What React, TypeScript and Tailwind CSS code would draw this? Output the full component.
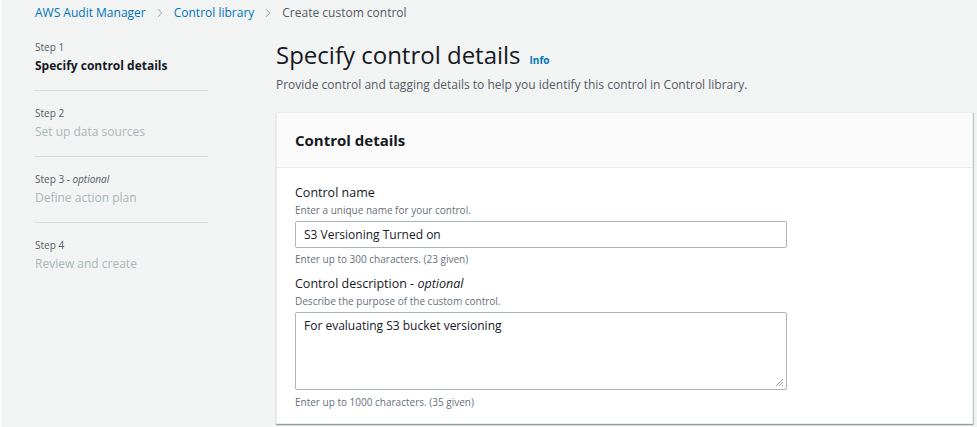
import { ChevronRight } from 'lucide-react';

const steps = [
  { label: 'Step 1', title: 'Specify control details', active: true },
  { label: 'Step 2', title: 'Set up data sources' },
  { label: 'Step 3', optional: true, title: 'Define action plan' },
  { label: 'Step 4', title: 'Review and create' },
];

const App = () => {
  return (
    <div className="min-h-[427px] w-[977px] bg-[#f2f3f3] border-l-2 border-[#fafafa] font-['Open_Sans',sans-serif] text-[#16191f]">
      {/* Breadcrumb */}
      <div className="flex items-center h-[26px] pl-[33px] text-[12px]">
        <a className="text-[#0073bb]">AWS Audit Manager</a>
        <ChevronRight className="h-[14px] w-[14px] mx-[7px] text-[#879596]" strokeWidth={1.5} />
        <a className="text-[#0073bb]">Control library</a>
        <ChevronRight className="h-[14px] w-[14px] mx-[7px] text-[#879596]" strokeWidth={1.5} />
        <span className="text-[#545b64]">Create custom control</span>
      </div>

      <div className="flex">
        {/* Side navigation */}
        <nav className="w-[173px] ml-[33px] mr-[68px] pt-[13px]">
          {steps.map((s, idx) => (
            <div
              key={idx}
              className={`pb-[14px] mb-[14px] ${idx < steps.length - 1 ? 'border-b border-[#d5dbdb]' : ''}`}
            >
              <p className="text-[10px] leading-[16px] text-[#545b64]">
                {s.label}
                {s.optional && <i> - optional</i>}
              </p>
              <p
                className={`text-[12px] leading-[20px] mt-[1px] ${
                  s.active ? 'font-bold text-[#16191f]' : 'text-[#aab7b8]'
                }`}
              >
                {s.title}
              </p>
            </div>
          ))}
        </nav>

        {/* Main content */}
        <main className="flex-1 pr-[4px]">
          <div className="flex items-baseline pt-[12px]">
            <h1 className="text-[24px] leading-[34px] font-normal text-[#16191f]">Specify control details</h1>
            <a className="ml-[9px] text-[10px] font-bold text-[#0073bb]">Info</a>
          </div>
          <p className="text-[12px] leading-[18px] text-[#545b64] mt-[4px]">
            Provide control and tagging details to help you identify this control in Control library.
          </p>

          <section className="mt-[18px] bg-white border border-[#eaeded] shadow-[0_1px_1px_0_rgba(0,28,36,0.3),1px_1px_1px_0_rgba(0,28,36,0.15)]">
            <div className="bg-[#fafafa] border-b border-[#eaeded] h-[55px] flex items-center px-[18px]">
              <h2 className="text-[15px] font-bold">Control details</h2>
            </div>

            <div className="px-[18px] pt-[16px] pb-[14px]">
              <div className="w-[492px]">
                <label className="block text-[12.5px] leading-[18px]">Control name</label>
                <p className="text-[10px] leading-[14px] text-[#687078] mt-[1px]">Enter a unique name for your control.</p>
                <div className="mt-[4px] h-[27px] border border-[#aab7b8] rounded-[2px] flex items-center px-[8px] text-[12px]">
                  S3 Versioning Turned on
                </div>
                <p className="text-[10px] leading-[14px] text-[#687078] mt-[4px]">Enter up to 300 characters. (23 given)</p>

                <label className="block text-[12.5px] leading-[18px] mt-[9px]">
                  Control description - <i>optional</i>
                </label>
                <p className="text-[10px] leading-[14px] text-[#687078] mt-[1px]">Describe the purpose of the custom control.</p>
                <div className="relative mt-[4px] h-[78px] border border-[#aab7b8] rounded-[2px] px-[8px] pt-[4px] text-[12px]">
                  For evaluating S3 bucket versioning
                  <svg className="absolute right-[2px] bottom-[2px]" width="9" height="9" viewBox="0 0 9 9">
                    <path d="M8 1L1 8M8 4L4 8M8 7L7 8" stroke="#999" strokeWidth="1" />
                  </svg>
                </div>
                <p className="text-[10px] leading-[14px] text-[#687078] mt-[5px]">Enter up to 1000 characters. (35 given)</p>
              </div>
            </div>
          </section>
        </main>
      </div>
    </div>
  );
};

export default App;
